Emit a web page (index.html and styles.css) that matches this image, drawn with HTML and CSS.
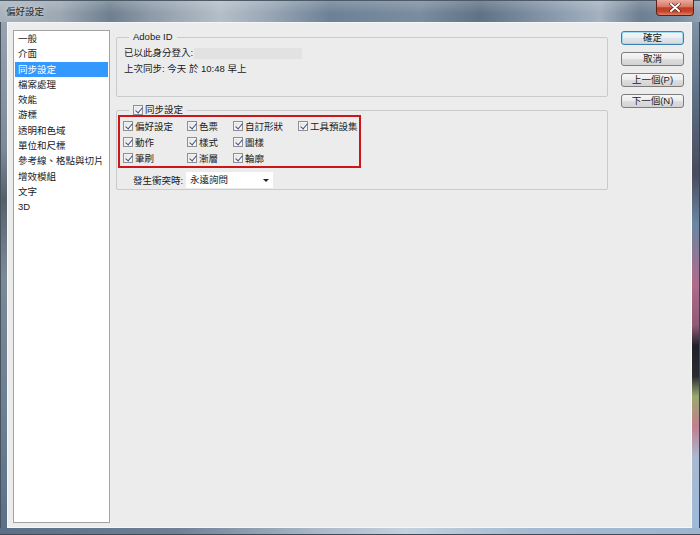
FILE: index.html
```html
<!DOCTYPE html>
<html lang="zh-Hant">
<head>
    <meta charset="UTF-8">
    <title>偏好設定</title>
    <link rel="stylesheet" href="styles.css">
</head>
<body>
    <div class="window">
        <div class="titlebar">
            <span class="title">偏好設定</span>
            <span class="close">
                <svg width="12" height="9" viewBox="0 0 12 9">
                    <path d="M2 1 L10 8 M10 1 L2 8" stroke="#4a1a12" stroke-width="3.2" stroke-linecap="round"/>
                    <path d="M2 1 L10 8 M10 1 L2 8" stroke="#ffffff" stroke-width="2" stroke-linecap="round"/>
                </svg>
            </span>
        </div>

        <div class="frame">
            <div class="edge-left"></div>

            <div class="client">
                <ul class="nav">
                    <li>一般</li>
                    <li>介面</li>
                    <li class="active">同步設定</li>
                    <li>檔案處理</li>
                    <li>效能</li>
                    <li>游標</li>
                    <li>透明和色域</li>
                    <li>單位和尺標</li>
                    <li>參考線、格點與切片</li>
                    <li>增效模組</li>
                    <li>文字</li>
                    <li>3D</li>
                </ul>

                <div class="panel">
                    <fieldset class="group adobe">
                        <legend>Adobe ID</legend>
                        <div class="info">
                            <p>已以此身分登入: <span class="account"></span></p>
                            <p>上次同步: 今天 於 10:48 早上</p>
                        </div>
                    </fieldset>

                    <fieldset class="group sync">
                        <legend><span class="cb"></span>同步設定</legend>
                        <div class="sync-items">
                            <label class="item"><span class="cb"></span>偏好設定</label>
                            <label class="item"><span class="cb"></span>動作</label>
                            <label class="item"><span class="cb"></span>筆刷</label>
                            <label class="item"><span class="cb"></span>色票</label>
                            <label class="item"><span class="cb"></span>樣式</label>
                            <label class="item"><span class="cb"></span>漸層</label>
                            <label class="item"><span class="cb"></span>自訂形狀</label>
                            <label class="item"><span class="cb"></span>圖樣</label>
                            <label class="item"><span class="cb"></span>輪廓</label>
                            <label class="item"><span class="cb"></span>工具預設集</label>
                        </div>
                        <div class="conflict">
                            <span class="conflict-label">發生衝突時:</span>
                            <div class="select">永遠詢問<span class="arrow"></span></div>
                        </div>
                    </fieldset>
                </div>

                <div class="buttons">
                    <button class="btn default">確定</button>
                    <button class="btn">取消</button>
                    <button class="btn">上一個(P)</button>
                    <button class="btn">下一個(N)</button>
                </div>
            </div>

            <div class="edge-right"></div>
        </div>

        <div class="edge-bottom"></div>
    </div>
</body>
</html>
```

FILE: styles.css
```css
/* Reset */
* {
    margin: 0;
    padding: 0;
    box-sizing: border-box;
}

body {
    font-family: "Liberation Sans", "Noto Sans CJK TC", sans-serif;
    font-size: 9.5px;
    color: #1a1a1a;
    background: #6c7f93;
}

/* Window frame */
.window {
    width: 700px;
    height: 535px;
    display: flex;
    flex-direction: column;
    overflow: hidden;
}

.titlebar {
    height: 22px;
    flex-shrink: 0;
    display: flex;
    justify-content: space-between;
    align-items: flex-start;
    background:
        linear-gradient(to bottom, rgba(255, 255, 255, 0.18), rgba(255, 255, 255, 0) 60%),
        linear-gradient(to right, #a9b3bd 0px, #9ca8b3 60px, #6f7f8f 110px, #8d9aa7 150px,
            #b4bec8 220px, #98a6b4 270px, #6d8196 330px, #7a8da0 420px, #5f7286 480px,
            #8d9db0 560px, #a4b1be 600px, #6d7f92 640px, #7d8fa2 680px, #8fa0b2 700px);
    border-top: 1px solid #4d5b69;
}

.title {
    margin: 5px 0 0 6px;
    color: #2a2a2a;
    line-height: 12px;
    text-shadow: 0 0 5px rgba(255, 255, 255, 0.7);
}

.close {
    width: 38px;
    height: 16px;
    margin-right: 6px;
    margin-top: -1px;
    display: flex;
    align-items: center;
    justify-content: center;
    border: 1px solid #5d2118;
    border-top: none;
    border-radius: 0 0 4px 4px;
    background: linear-gradient(to bottom, #e8ab9e 0%, #d87663 45%, #c13b22 52%, #c6462c 78%, #de8269 100%);
}

.frame {
    flex: 1;
    display: flex;
    min-height: 0;
}

.edge-left {
    width: 7px;
    border-left: 1px solid #46525e;
    background: linear-gradient(to bottom, #97a3ae 0%, #7c8a98 25%, #56606b 35%, #7b8997 50%, #6a7d92 80%, #5b7089 100%);
}

.edge-right {
    width: 8px;
    border-right: 1px solid #3a4450;
    background: linear-gradient(to bottom, #7f92a6 0%, #5d6f84 15%, #4a4a5c 30%, #6a87a3 40%,
        #b06a8a 52%, #8e5a76 60%, #1f2228 64%, #2a2c30 70%, #9aa870 74%, #c08090 80%,
        #a9b9d2 86%, #9dbbd8 100%);
}

.edge-bottom {
    height: 7px;
    flex-shrink: 0;
    border-bottom: 1px solid #3f4b58;
    background: linear-gradient(to right, #5b6f86 0%, #6f8096 25%, #a9b7c6 45%, #c3d1df 58%,
        #a6bad0 75%, #9cb6d0 100%);
}

/* Client area */
.client {
    flex: 1;
    display: flex;
    background-color: #ececec;
    border: 1px solid #f5f7f9;
}

/* Category list */
.nav {
    list-style: none;
    width: 97px;
    margin: 7px 0 4px 5px;
    padding: 0 1px;
    background-color: #ffffff;
    border: 1px solid #a3a3a3;
}

.nav li {
    line-height: 15.3px;
    padding-left: 3px;
    white-space: nowrap;
}

.nav li.active {
    background-color: #3399ff;
    color: #ffffff;
}

/* Right panel */
.panel {
    width: 492px;
    margin: 9px 0 0 6px;
    align-self: flex-start;
}

.group {
    border: 1px solid #c9cacb;
    border-radius: 2px;
    padding: 0;
    margin: 0;
}

.group legend {
    margin-left: 12px;
    padding: 0 4px;
    line-height: 10px;
    display: flex;
    align-items: center;
    gap: 2px;
}

.info {
    padding: 3px 0 19px 7px;
}

.info p {
    line-height: 16px;
    display: flex;
    align-items: center;
}

.account {
    display: inline-block;
    width: 108px;
    height: 11px;
    margin-left: 1px;
    background-color: #e2e2e2;
}

.sync {
    margin-top: 8px;
    padding-bottom: 1px;
}

/* Checkboxes */
.cb {
    position: relative;
    display: inline-block;
    width: 10px;
    height: 10px;
    flex-shrink: 0;
    border: 1px solid #8e8f8f;
    background: linear-gradient(135deg, #d9dbdd 0%, #f4f4f4 60%, #ffffff 100%);
    box-shadow: inset 0 0 0 1px #f2f2f2;
}

.cb::after {
    content: "";
    position: absolute;
    left: 2.5px;
    top: 0px;
    width: 3px;
    height: 6px;
    border-right: 1.6px solid #3d4f86;
    border-bottom: 1.6px solid #3d4f86;
    transform: rotate(40deg);
}

.sync-items {
    width: 243px;
    margin-left: 1px;
    padding: 1px 0 0 3px;
    border: 2px solid #cc1619;
    display: grid;
    grid-auto-flow: column;
    grid-template-rows: repeat(3, 16px);
    grid-template-columns: 64px 46px 65px auto;
}

.item {
    display: flex;
    align-items: center;
    gap: 2px;
    white-space: nowrap;
}

/* Conflict dropdown */
.conflict {
    display: flex;
    align-items: center;
    margin: 4px 0 0 16px;
    height: 16px;
}

.conflict-label {
    width: 53px;
}

.select {
    position: relative;
    width: 87px;
    height: 16px;
    line-height: 16px;
    padding-left: 4px;
    background-color: #ffffff;
}

.arrow {
    position: absolute;
    right: 4px;
    top: 7px;
    border-left: 3px solid transparent;
    border-right: 3px solid transparent;
    border-top: 3px solid #222222;
}

/* Buttons */
.buttons {
    width: 63px;
    margin: 8px 0 0 13px;
    display: flex;
    flex-direction: column;
    gap: 7px;
    align-self: flex-start;
}

.btn {
    height: 14px;
    font-family: inherit;
    font-size: 9.5px;
    color: #1a1a1a;
    line-height: 12px;
    border: 1px solid #7d7d7d;
    border-radius: 3px;
    background: linear-gradient(to bottom, #f6f6f6 0%, #ececec 48%, #dedede 52%, #d2d2d2 100%);
}

.btn.default {
    border-color: #3c7fb1;
    box-shadow: inset 0 0 0 1px #9fdcf3;
    background: linear-gradient(to bottom, #f4f8fa 0%, #eaeff2 48%, #dfe5e8 52%, #d4dadd 100%);
}
```
